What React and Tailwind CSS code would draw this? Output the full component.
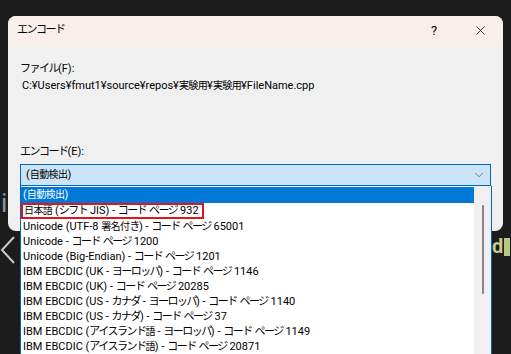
import { X, ChevronDown } from 'lucide-react';

const items = [
    '(自動検出)',
    '日本語 (シフト JIS) - コード ページ 932',
    'Unicode (UTF-8 署名付き) - コード ページ 65001',
    'Unicode - コード ページ 1200',
    'Unicode (Big-Endian) - コード ページ 1201',
    'IBM EBCDIC (UK - ヨーロッパ) - コード ページ 1146',
    'IBM EBCDIC (UK) - コード ページ 20285',
    'IBM EBCDIC (US - カナダ - ヨーロッパ) - コード ページ 1140',
    'IBM EBCDIC (US - カナダ) - コード ページ 37',
    'IBM EBCDIC (アイスランド語 - ヨーロッパ) - コード ページ 1149',
    'IBM EBCDIC (アイスランド語) - コード ページ 20871',
];

// kana get tighter spacing and kanji a smaller size, like the narrow Windows UI font
function Jp({ text }) {
    const parts = text.split(/([\u3040-\u30ff]+|[\u4e00-\u9fff]+)/);
    return parts.map((p, i) => {
        if (i % 2 === 0) return p;
        if (/[\u4e00-\u9fff]/.test(p)) {
            return <span key={i} className="text-[10px] tracking-[-0.6px]">{p}</span>;
        }
        return <span key={i} className="tracking-[-1.5px]">{p}</span>;
    });
}

export default function App() {
    return (
        <div className='relative w-[511px] h-[354px] overflow-hidden bg-[#1c1c1c] pt-[16px] px-[8px] text-[11px] text-black font-["Roboto","Noto_Sans_CJK_JP",sans-serif]'>
            {/* background app showing behind the dialog */}
            <span className="absolute left-[1px] top-[190px] text-[26px] leading-none text-[#8095aa]">i</span>
            <svg className="absolute left-0 top-[236px]" width="16" height="28" viewBox="0 0 16 28">
                <path d="M14 1 L2 14 L14 27" fill="none" stroke="#c8c8c8" strokeWidth="2" />
            </svg>
            <div className="absolute left-[492px] top-[236px] flex items-end gap-[1px]">
                <span className="text-[20px] leading-none font-bold text-[#c9c98a]">d</span>
                <span className="w-[6px] h-[18px] bg-[#b5c98a]"></span>
            </div>

            {/* dialog */}
            <div className="relative h-[215px] rounded-lg bg-[#f0f0f0]">
                <div className="h-[29px] rounded-t-lg bg-[#f8efed] flex items-center pl-[9px]">
                    <span className="flex-1"><Jp text="エンコード" /></span>
                    <span className="w-[46px] text-center text-[13px]">?</span>
                    <span className="w-[46px] flex justify-center">
                        <X size={15} strokeWidth={1.2} />
                    </span>
                </div>

                <div className="px-[12px]">
                    <div className="mt-[16px] leading-[16px]"><Jp text="ファイル(F):" /></div>
                    <div className="mt-[1px] pl-[2px] leading-[16px]">
                        <Jp text="C:¥Users¥fmut1¥source¥repos¥実験用¥実験用¥FileName.cpp" />
                    </div>
                    <div className="mt-[50px] leading-[16px]"><Jp text="エンコード(E):" /></div>
                    <div className="mt-[4px] h-[22px] w-[471px] border border-[#0067c0] bg-[#cce4f7] flex items-center pl-[5px] pr-[4px]">
                        <span className="flex-1"><Jp text="(自動検出)" /></span>
                        <ChevronDown size={14} strokeWidth={1} className="text-[#333]" />
                    </div>
                </div>

                {/* dropdown list */}
                <div className="absolute left-[12px] top-[170px] w-[472px] h-[200px] bg-white border-x border-[#0067c0] flex">
                    <div className="flex-1 flex flex-col whitespace-nowrap">
                        {items.map((item, i) => (
                            <div
                                key={i}
                                className={
                                    i === 0
                                        ? 'h-[16px] leading-[16px] pl-[2px] bg-[#0078d7] text-white mt-[1px]'
                                        : i === 1
                                        ? 'h-[16px] leading-[12px] pl-[1px] pr-[3px] w-fit border-2 border-[#e0141e]'
                                        : 'h-[15px] leading-[15px] pl-[2px]'
                                }
                            >
                                <Jp text={item} />
                            </div>
                        ))}
                    </div>
                    <div className="w-[17px] bg-[#f0f0f0] flex justify-center pt-[19px]">
                        <div className="w-[2px] h-[89px] bg-[#858585] rounded-full"></div>
                    </div>
                </div>
            </div>
        </div>
    );
}
